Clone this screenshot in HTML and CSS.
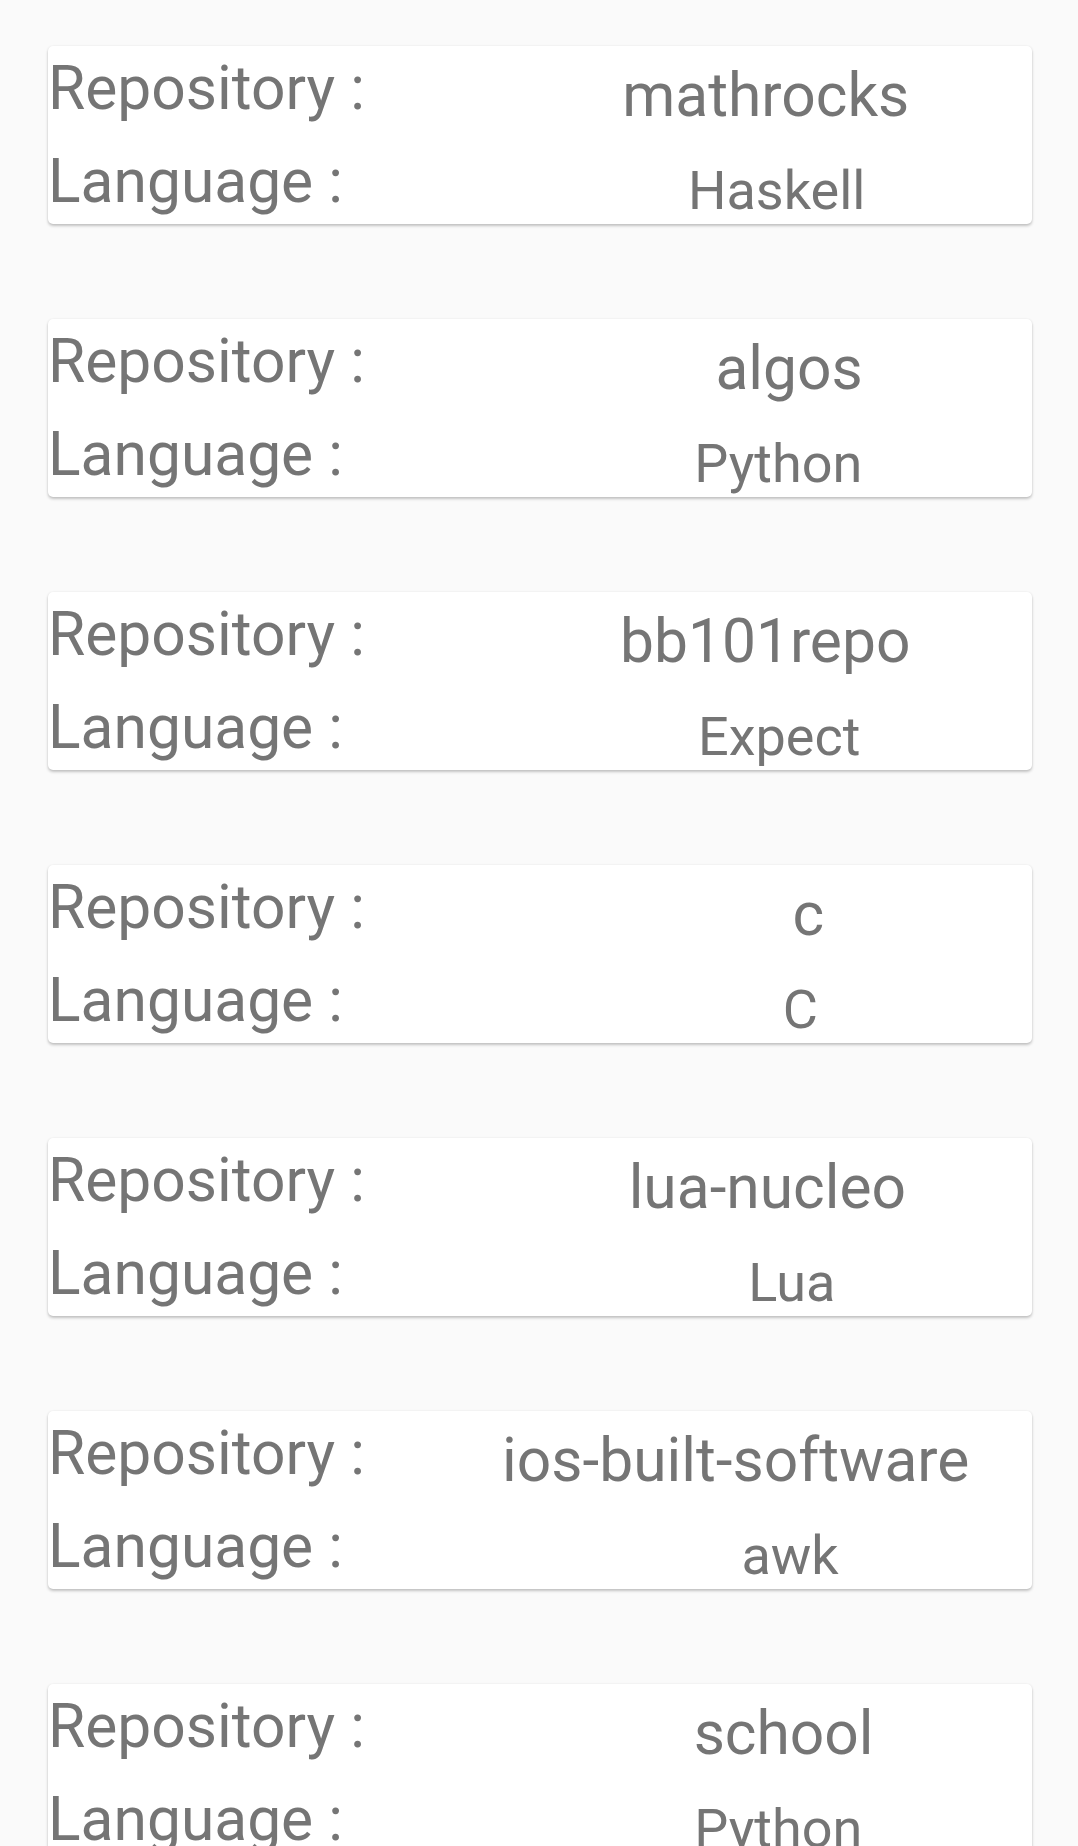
FILE: index.html
```html
<!DOCTYPE html>
<html>
<head>
<meta charset="utf-8">
<link rel="stylesheet" href="styles.css">
</head>
<body>
<div class="list">
  <div class="card">
    <div class="row"><span class="label">Repository :</span><span class="grow2"></span><span class="value repo">mathrocks</span><span class="grow1"></span></div>
    <div class="row"><span class="label">Language :</span><span class="grow2"></span><span class="value lang">Haskell</span><span class="grow1"></span></div>
  </div>
  <div class="card">
    <div class="row"><span class="label">Repository :</span><span class="grow2"></span><span class="value repo">algos</span><span class="grow1"></span></div>
    <div class="row"><span class="label">Language :</span><span class="grow2"></span><span class="value lang">Python</span><span class="grow1"></span></div>
  </div>
  <div class="card">
    <div class="row"><span class="label">Repository :</span><span class="grow2"></span><span class="value repo">bb101repo</span><span class="grow1"></span></div>
    <div class="row"><span class="label">Language :</span><span class="grow2"></span><span class="value lang">Expect</span><span class="grow1"></span></div>
  </div>
  <div class="card">
    <div class="row"><span class="label">Repository :</span><span class="grow2"></span><span class="value repo">c</span><span class="grow1"></span></div>
    <div class="row"><span class="label">Language :</span><span class="grow2"></span><span class="value lang">C</span><span class="grow1"></span></div>
  </div>
  <div class="card">
    <div class="row"><span class="label">Repository :</span><span class="grow2"></span><span class="value repo">lua-nucleo</span><span class="grow1"></span></div>
    <div class="row"><span class="label">Language :</span><span class="grow2"></span><span class="value lang">Lua</span><span class="grow1"></span></div>
  </div>
  <div class="card">
    <div class="row"><span class="label">Repository :</span><span class="grow2"></span><span class="value repo">ios-built-software</span><span class="grow1"></span></div>
    <div class="row"><span class="label">Language :</span><span class="grow2"></span><span class="value lang">awk</span><span class="grow1"></span></div>
  </div>
  <div class="card">
    <div class="row"><span class="label">Repository :</span><span class="grow2"></span><span class="value repo">school</span><span class="grow1"></span></div>
    <div class="row"><span class="label">Language :</span><span class="grow2"></span><span class="value lang">Python</span><span class="grow1"></span></div>
  </div>
</div>
</body>
</html>
```

FILE: styles.css
```css
html, body {
  margin: 0;
  padding: 0;
  background: #fafafa;
}
body {
  font-family: Roboto, "Noto Sans", "Liberation Sans", sans-serif;
  color: #757575;
  height: 1846px;
  overflow: hidden;
}
.list {
  display: flex;
  flex-direction: column;
  gap: 95px;
  padding: 46px 46px 0 48px;
}
.card {
  background: #ffffff;
  border-radius: 5px;
  box-shadow: 0 2px 3px rgba(0, 0, 0, 0.22), 0 0 2px rgba(0, 0, 0, 0.08);
  height: 178px;
  box-sizing: border-box;
  padding: 7px 0 6px 0;
  display: flex;
  flex-direction: column;
  gap: 21px;
}
.row {
  display: flex;
  align-items: flex-start;
  height: 72px;
  margin-right: -6px;
  white-space: nowrap;
}
.label {
  font-size: 60.5px;
  line-height: 72px;
}
.value {
  line-height: 72px;
}
.repo {
  font-size: 60.5px;
  margin-top: 7px;
}
.lang {
  font-size: 54px;
  margin-top: 9px;
}
.grow2 {
  flex: 2 1 0;
}
.grow1 {
  flex: 1 1 0;
}
```
